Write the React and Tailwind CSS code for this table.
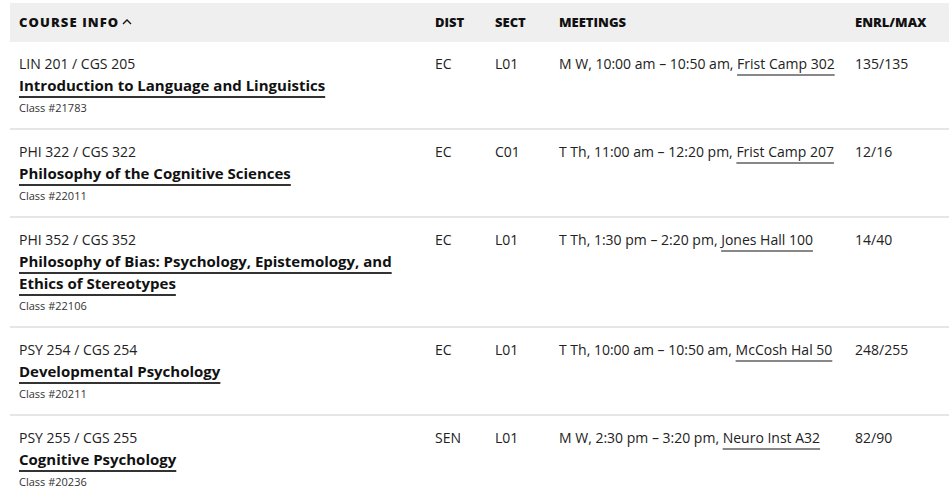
import React from "react";

const rows = [
  { code: "LIN 201 / CGS 205", title: ["Introduction to Language and Linguistics"], cls: "21783", dist: "EC", sect: "L01", time: "M W, 10:00 am – 10:50 am, ", loc: "Frist Camp 302", enrl: "135/135" },
  { code: "PHI 322 / CGS 322", title: ["Philosophy of the Cognitive Sciences"], cls: "22011", dist: "EC", sect: "C01", time: "T Th, 11:00 am – 12:20 pm, ", loc: "Frist Camp 207", enrl: "12/16" },
  { code: "PHI 352 / CGS 352", title: ["Philosophy of Bias: Psychology, Epistemology, and", "Ethics of Stereotypes"], cls: "22106", dist: "EC", sect: "L01", time: "T Th, 1:30 pm – 2:20 pm, ", loc: "Jones Hall 100", enrl: "14/40" },
  { code: "PSY 254 / CGS 254", title: ["Developmental Psychology"], cls: "20211", dist: "EC", sect: "L01", time: "T Th, 10:00 am – 10:50 am, ", loc: "McCosh Hal 50", enrl: "248/255" },
  { code: "PSY 255 / CGS 255", title: ["Cognitive Psychology"], cls: "20236", dist: "SEN", sect: "L01", time: "M W, 2:30 pm – 3:20 pm, ", loc: "Neuro Inst A32", enrl: "82/90" },
];

const grid = "grid grid-cols-[416px_60px_64px_296px_1fr]";

export default function App() {
  return (
    <div className="w-[949px] h-[500px] overflow-hidden bg-white pt-[3px] pl-[10px]" style={{ fontFamily: "'Open Sans', 'Liberation Sans', sans-serif" }}>
      <div className={`${grid} bg-[#efefef] h-[39px] items-center text-[13px] font-extrabold text-[#111]`}>
        <div className="px-[9px] flex items-center gap-[3px]">
          <span className="tracking-[1.1px]">COURSE INFO</span>
          <svg width="10" height="8" viewBox="0 0 10 8" className="mb-[2px]"><path d="M1 6 L5 2 L9 6" fill="none" stroke="#111" strokeWidth="1.3" /></svg>
        </div>
        <div className="px-[9px]">DIST</div>
        <div className="px-[9px]">SECT</div>
        <div className="px-[9px]">MEETINGS</div>
        <div className="px-[9px]">ENRL/MAX</div>
      </div>
      {rows.map((r, i) => (
        <div key={i} className={`${grid} border-b-2 border-[#e6e6e6] text-[14px] text-[#222]`}>
          <div className="px-[9px] pt-[12px] pb-[9px]">
            <div className="leading-[20px]">{r.code}</div>
            <div className="text-[15px] font-bold leading-[22px] text-[#111]">
              {r.title.map((t, j) => (
                <div key={j}>
                  <span className="underline decoration-[1.5px] underline-offset-[5px] decoration-[#333]">{t}</span>
                </div>
              ))}
            </div>
            <div className="text-[11px] leading-[22px] mt-[1px] text-[#333]">Class #{r.cls}</div>
          </div>
          <div className="px-[9px] pt-[12px] leading-[20px]">{r.dist}</div>
          <div className="px-[9px] pt-[12px] leading-[20px]">{r.sect}</div>
          <div className="px-[9px] pt-[12px] leading-[20px] whitespace-nowrap">
            {r.time}
            <span className="underline decoration-[2px] underline-offset-[5px] decoration-[#888]">{r.loc}</span>
          </div>
          <div className="px-[9px] pt-[12px] leading-[20px]">{r.enrl}</div>
        </div>
      ))}
    </div>
  );
}
